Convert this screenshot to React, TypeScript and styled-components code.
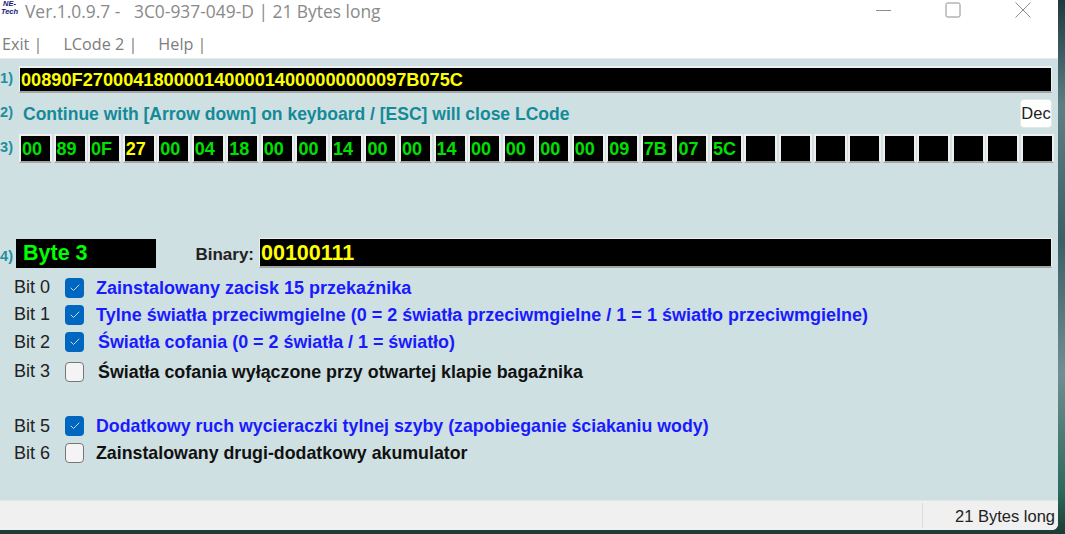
import React from "react";
import styled, { createGlobalStyle } from "styled-components";
import { FiCheck } from "react-icons/fi";

const cells = ["00", "89", "0F", "27", "00", "04", "18", "00", "00", "14", "00", "00", "14", "00", "00", "00", "00", "09", "7B", "07", "5C", "", "", "", "", "", "", "", "", ""];

const bits = [
  { name: "Bit 0", text: "Zainstalowany zacisk 15 przekaźnika", on: true, indent: 0, drop: 0, size: 18 },
  { name: "Bit 1", text: "Tylne światła przeciwmgielne (0 = 2 światła przeciwmgielne / 1 = 1 światło przeciwmgielne)", on: true, indent: 0, drop: 0, size: 18 },
  { name: "Bit 2", text: "Światła cofania (0 = 2 światła / 1 = światło)", on: true, indent: 2, drop: 0, size: 17.9 },
  { name: "Bit 3", text: "Światła cofania wyłączone przy otwartej klapie bagażnika", on: false, indent: 2, drop: 2, size: 17.85 },
  null,
  { name: "Bit 5", text: "Dodatkowy ruch wycieraczki tylnej szyby (zapobieganie ściakaniu wody)", on: true, indent: 0, drop: 0, size: 17.75 },
  { name: "Bit 6", text: "Zainstalowany drugi-dodatkowy akumulator", on: false, indent: 0, drop: 0, size: 17.8 },
];

const GlobalStyle = createGlobalStyle`
  html, body {
    margin: 0;
    height: 100%;
    overflow: hidden;
    background: #35504f;
  }
  #root {
    height: 100%;
  }
`;

const Desktop = styled.div`
  display: flex;
  width: 1065px;
  height: 534px;
  background: linear-gradient(180deg, #1d3a40 0%, #5d7f84 20%, #3c5f66 45%, #6f8f92 70%, #2c6a5b 92%, #1c3b34 100%);
`;

const AppWindow = styled.div`
  display: flex;
  flex-direction: column;
  width: 1058px;
  height: 530px;
  background: #fff;
  border-bottom-right-radius: 6px;
  overflow: hidden;
  font-family: "Liberation Sans", Arial, sans-serif;
`;

const TitleBar = styled.div`
  display: flex;
  align-items: flex-start;
  height: 24px;
  flex: none;
`;

const Logo = styled.div`
  width: 19px;
  margin-right: 6px;
  flex: none;
  color: #15157a;
  font: italic bold 7.5px/8px "Liberation Sans", Arial, sans-serif;
  text-align: center;
`;

const Title = styled.div`
  flex: 1;
  color: #8a8a8a;
  font: 17.4px/22px "Open Sans", sans-serif;
  white-space: pre;
`;

const WindowButton = styled.div`
  display: flex;
  align-items: center;
  justify-content: center;
  width: 70px;
  height: 19px;
  color: #8c8c8c;
`;

const MenuBar = styled.div`
  display: flex;
  align-items: center;
  height: 34px;
  flex: none;
  padding: 5px 0 0 2px;
  box-sizing: border-box;
  gap: 21px;
  font: 16.2px "Open Sans", sans-serif;
  color: #7d7d7d;
`;

const Panel = styled.div`
  flex: 1;
  display: flex;
  flex-direction: column;
  background: #cee0e2;
  border-top: 1px solid #e6ecec;
`;

const Row = styled.div<{ $h: number; $mt: number }>`
  display: flex;
  align-items: center;
  height: ${(p) => p.$h}px;
  margin-top: ${(p) => p.$mt}px;
  padding-right: 6px;
`;

const RowLabel = styled.div<{ $w?: number; $dy?: number }>`
  display: flex;
  justify-content: flex-end;
  width: ${(p) => p.$w ?? 19}px;
  flex: none;
  padding-right: ${(p) => (p.$w ? 3 : 6)}px;
  margin-top: ${(p) => p.$dy ?? -3}px;
  box-sizing: border-box;
  color: #1f8f9f;
  font-size: 14.5px;
  font-weight: bold;
  white-space: nowrap;
`;

const Display = styled.div<{ $size: number; $color: string; $top: number }>`
  flex: 1;
  display: flex;
  align-items: center;
  height: 100%;
  box-sizing: border-box;
  padding: 1px 0 0 1px;
  background: #000;
  color: ${(p) => p.$color};
  font-size: ${(p) => p.$size}px;
  font-weight: bold;
  border: solid #efefef;
  border-width: ${(p) => p.$top}px 1px 2px;
  border-bottom-color: #a5a5a5;
`;

const Hint = styled.div`
  flex: 1;
  padding: 1px 0 0 4px;
  color: #138a98;
  font-size: 17.5px;
  font-weight: bold;
`;

const DecButton = styled.div`
  display: flex;
  align-items: center;
  justify-content: center;
  width: 32px;
  height: 29px;
  box-sizing: border-box;
  background: #fff;
  border: 1px solid #e4e8e8;
  border-radius: 4px;
  color: #222;
  font-size: 16.5px;
`;

const CellRow = styled.div`
  flex: 1;
  display: flex;
  gap: 1.55px;
`;

const Cell = styled.div<{ $active: boolean }>`
  width: 33px;
  height: 29px;
  box-sizing: border-box;
  padding-left: 1px;
  background: #000;
  border: 2px solid #efefef;
  border-bottom-color: #a5a5a5;
  color: ${(p) => (p.$active ? "#ffff00" : "#00e000")};
  font-size: 18px;
  font-weight: bold;
  line-height: 27px;
`;

const ByteBox = styled.div`
  width: 140px;
  height: 29px;
  flex: none;
  box-sizing: border-box;
  padding-left: 7px;
  background: #000;
  color: #00ff00;
  font-size: 21.5px;
  font-weight: bold;
  line-height: 28px;
`;

const BinaryLabel = styled.div`
  width: 103px;
  flex: none;
  box-sizing: border-box;
  padding: 4px 5px 0 0;
  text-align: right;
  color: #222;
  font-size: 17px;
  font-weight: bold;
`;

const BitList = styled.div`
  display: flex;
  flex-direction: column;
  margin-top: 6px;
`;

const BitRow = styled.div<{ $drop?: number }>`
  display: flex;
  align-items: center;
  height: 27.3px;
  margin-top: ${(p) => p.$drop ?? 0}px;
  padding-left: 14px;
`;

const BitName = styled.div`
  width: 51px;
  flex: none;
  color: #222;
  font-size: 18px;
`;

const CheckBox = styled.div<{ $on: boolean }>`
  display: flex;
  align-items: center;
  justify-content: center;
  width: 19px;
  height: 20px;
  flex: none;
  box-sizing: border-box;
  border-radius: 4px;
  color: #c9dcee;
  background: ${(p) => (p.$on ? "#0067c0" : "#f4f4f4")};
  border: ${(p) => (p.$on ? "none" : "1.5px solid #777")};
`;

const BitText = styled.div<{ $on: boolean; $indent: number; $size: number }>`
  margin-left: ${(p) => 12 + p.$indent}px;
  padding-top: 1px;
  color: ${(p) => (p.$on ? "#1a1aff" : "#111")};
  font-size: ${(p) => p.$size}px;
  font-weight: bold;
  white-space: nowrap;
`;

const StatusBar = styled.div`
  display: flex;
  justify-content: flex-end;
  height: 29px;
  flex: none;
  background: #f0f0f0;
  border-top: 1px solid #e2e6e6;
`;

const StatusCell = styled.div`
  width: 136px;
  margin: 2px 0;
  box-sizing: border-box;
  padding-right: 3px;
  border-left: 1px solid #dcdcdc;
  text-align: right;
  color: #222;
  font-size: 16.5px;
  line-height: 27px;
`;

export default function App(): JSX.Element {
  return (
    <Desktop>
      <GlobalStyle />
      <AppWindow>
        <TitleBar>
          <Logo>
            NE-
            <br />
            Tech
          </Logo>
          <Title>{"Ver.1.0.9.7 -   3C0-937-049-D | 21 Bytes long"}</Title>
          <WindowButton>
            <svg width="16" height="16" viewBox="0 0 16 16">
              <path d="M1 8.500h15" stroke="currentColor" fill="none" />
            </svg>
          </WindowButton>
          <WindowButton>
            <svg width="16" height="16" viewBox="0 0 16 16">
              <rect x="1" y="1" width="14" height="14" rx="1.5" stroke="currentColor" fill="none" />
            </svg>
          </WindowButton>
          <WindowButton>
            <svg width="16" height="16" viewBox="0 0 16 16">
              <path d="M.5.5l15 15M15.500.5l-15 15" stroke="currentColor" fill="none" />
            </svg>
          </WindowButton>
        </TitleBar>
        <MenuBar>
          <span>Exit |</span>
          <span>LCode 2 |</span>
          <span>Help |</span>
        </MenuBar>
        <Panel>
          <Row $h={27} $mt={7}>
            <RowLabel>1)</RowLabel>
            <Display $size={18.2} $color="#ffff00" $top={2}>00890F27000418000014000014000000000097B075C</Display>
          </Row>
          <Row $h={29} $mt={6}>
            <RowLabel>2)</RowLabel>
            <Hint>Continue with [Arrow down] on keyboard / [ESC] will close LCode</Hint>
            <DecButton>Dec</DecButton>
          </Row>
          <Row $h={29} $mt={6}>
            <RowLabel>3)</RowLabel>
            <CellRow>
              {cells.map((c, i) => (
                <Cell key={i} $active={i === 3}>{c}</Cell>
              ))}
            </CellRow>
          </Row>
          <Row $h={30} $mt={75}>
            <RowLabel $w={16} $dy={6}>4)</RowLabel>
            <ByteBox>Byte 3</ByteBox>
            <BinaryLabel>Binary:</BinaryLabel>
            <Display $size={21.5} $color="#ffff00" $top={1}>00100111</Display>
          </Row>
          <BitList>
            {bits.map((b, i) =>
              b ? (
                <BitRow key={i} $drop={b.drop}>
                  <BitName>{b.name}</BitName>
                  <CheckBox $on={b.on}>{b.on && <FiCheck size={12} />}</CheckBox>
                  <BitText $on={b.on} $indent={b.indent} $size={b.size}>{b.text}</BitText>
                </BitRow>
              ) : (
                <BitRow key={i} />
              )
            )}
          </BitList>
        </Panel>
        <StatusBar>
          <StatusCell>21 Bytes long</StatusCell>
        </StatusBar>
      </AppWindow>
    </Desktop>
  );
}
